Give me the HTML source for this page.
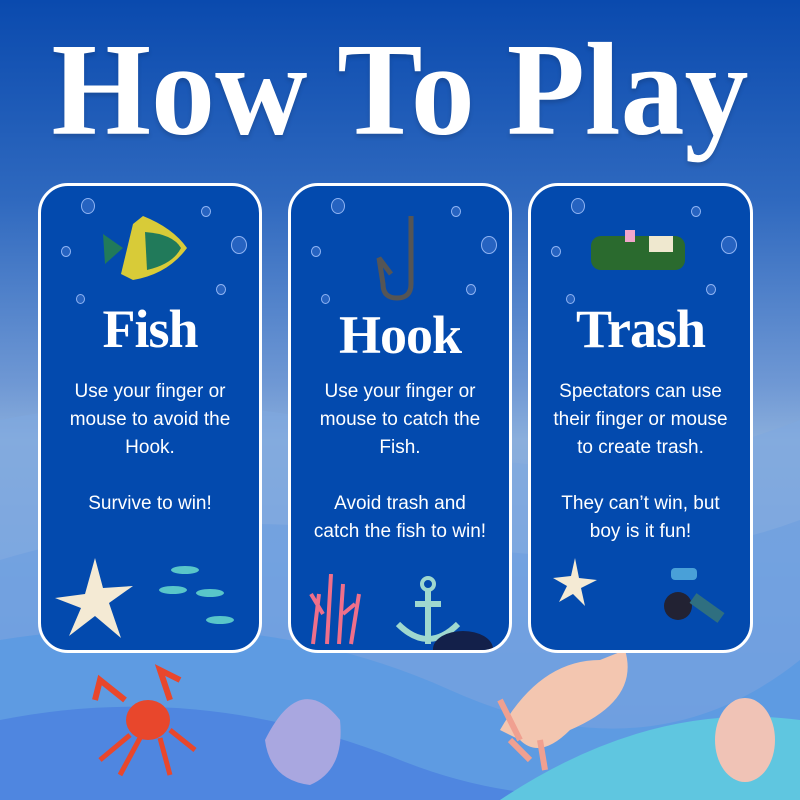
<!DOCTYPE html>
<html><head><style>
html,body{margin:0;padding:0}
body{width:800px;height:800px;position:relative;overflow:hidden;font-family:"Liberation Sans",sans-serif;
background:linear-gradient(180deg,#0a4aae 0%,#2f69bf 25%,#6f98d4 48%,#8aaedc 55%,#7aa6e0 70%,#5a8ee0 100%);}
.bg{position:absolute;left:0;top:0}
h1{position:absolute;left:0;top:23px;width:800px;margin:0;text-align:center;color:#fff;font-family:"Liberation Serif",serif;font-weight:bold;font-size:128px;line-height:128px;transform:scaleY(1.035);transform-origin:top;text-shadow:0 3px 4px rgba(0,0,0,.15);white-space:nowrap}
.card{position:absolute;top:183px;height:464px;background:#034aae;border:3px solid #fff;border-radius:30px;color:#fff;text-align:center;overflow:hidden}
.card h2{position:absolute;left:0;right:0;margin:0;font-family:"Liberation Serif",serif;font-weight:bold;font-size:54px;letter-spacing:-1px}
.card p{position:absolute;left:0;right:0;top:192px;margin:0;font-size:19px;line-height:28px}
.b{position:absolute;border:1.5px solid rgba(170,200,255,.8);border-radius:50%;background:rgba(120,160,240,.3)}
</style></head><body>
<svg class="bg" width="800" height="800">
<path d="M0 420 Q200 380 400 440 T800 420 L800 800 L0 800Z" fill="#7ea8e0" opacity=".6"/>
<path d="M0 560 Q200 500 420 540 T800 520 L800 800 L0 800Z" fill="#6d9ee0" opacity=".6"/>
<path d="M0 640 Q250 600 450 690 T800 660 L800 800 L0 800Z" fill="#5e9be2"/>
<path d="M0 720 Q200 680 400 760 T800 740 L800 800 L0 800Z" fill="#4f86e0"/>
<path d="M500 800 Q650 700 800 720 L800 800Z" fill="#5fc6e0"/>
<g fill="#e8472c"><ellipse cx="148" cy="720" rx="22" ry="20"/><path d="M125 700 L100 680 L95 700 M170 700 L160 670 L180 680" stroke="#e8472c" stroke-width="6" fill="none"/><path d="M130 735 L100 760 M140 738 L120 775 M160 738 L170 775 M170 730 L195 750" stroke="#e8472c" stroke-width="5"/></g>
<path d="M265 740 Q300 670 340 720 Q345 770 310 785 Q270 780 265 740Z" fill="#a9a7e0"/>
<path d="M500 730 Q540 660 600 660 L625 650 Q640 700 570 730 Q540 760 520 740Z" fill="#f3c6b0"/>
<path d="M500 700 L520 740 M510 740 L530 760 M540 740 L545 770" stroke="#f0a090" stroke-width="6"/>
<ellipse cx="745" cy="740" rx="30" ry="42" fill="#f0c3b6"/>
</svg>
<h1>How To Play</h1>

<div class="card" style="left:38px;width:218px">
 <div class="b" style="left:40px;top:12px;width:12px;height:14px"></div><div class="b" style="left:190px;top:50px;width:14px;height:16px"></div><div class="b" style="left:20px;top:60px;width:8px;height:9px"></div><div class="b" style="left:175px;top:98px;width:8px;height:9px"></div><div class="b" style="left:35px;top:108px;width:7px;height:8px"></div><div class="b" style="left:160px;top:20px;width:8px;height:9px"></div>
 <svg style="position:absolute;left:62px;top:28px" width="92" height="70"><path d="M40 2 L30 10 L18 60 L30 66 Q65 60 84 34 Q70 14 40 2Z" fill="#d8cb38"/><path d="M42 18 Q70 20 78 34 Q70 50 44 56Z" fill="#217a5a"/><path d="M0 20 L20 34 L2 50Z" fill="#217a5a"/></svg>
 <h2 style="top:112px">Fish</h2>
 <p>Use your finger or<br>mouse to avoid the<br>Hook.<br><br>Survive to win!</p>
 <svg style="position:absolute;left:14px;top:372px" width="200" height="90"><path d="M40 0 L48 30 L78 28 L54 45 L66 80 L40 58 L14 78 L26 50 L0 40 L30 36Z" fill="#f4ead4"/><g fill="#59c6c9"><ellipse cx="130" cy="12" rx="14" ry="4"/><ellipse cx="118" cy="32" rx="14" ry="4"/><ellipse cx="155" cy="35" rx="14" ry="4"/><ellipse cx="165" cy="62" rx="14" ry="4"/></g></svg>
</div>

<div class="card" style="left:288px;width:218px">
 <div class="b" style="left:40px;top:12px;width:12px;height:14px"></div><div class="b" style="left:190px;top:50px;width:14px;height:16px"></div><div class="b" style="left:20px;top:60px;width:8px;height:9px"></div><div class="b" style="left:175px;top:98px;width:8px;height:9px"></div><div class="b" style="left:30px;top:108px;width:7px;height:8px"></div><div class="b" style="left:160px;top:20px;width:8px;height:9px"></div>
 <svg style="position:absolute;left:80px;top:28px" width="50" height="90"><path d="M40 2 L40 70 Q40 84 26 84 Q12 84 12 70 L8 44 L20 60" stroke="#555" stroke-width="5" fill="none"/></svg>
 <h2 style="top:118px">Hook</h2>
 <p>Use your finger or<br>mouse to catch the<br>Fish.<br><br>Avoid trash and<br>catch the fish to win!</p>
 <svg style="position:absolute;left:12px;top:388px" width="200" height="80"><path d="M10 70 L16 20 M24 70 L28 0 M36 70 L40 10 M48 70 L56 20 M20 40 L8 20 M40 40 L52 30" stroke="#ef6f8a" stroke-width="4" fill="none"/><circle cx="125" cy="10" r="6" stroke="#9fd8cf" stroke-width="4" fill="none"/><path d="M125 16 L125 70 M95 50 Q125 80 155 50 M112 30 L138 30" stroke="#9fd8cf" stroke-width="6" fill="none"/><ellipse cx="160" cy="75" rx="30" ry="18" fill="#13204a"/></svg>
</div>

<div class="card" style="left:528px;width:219px">
 <div class="b" style="left:40px;top:12px;width:12px;height:14px"></div><div class="b" style="left:190px;top:50px;width:14px;height:16px"></div><div class="b" style="left:20px;top:60px;width:8px;height:9px"></div><div class="b" style="left:175px;top:98px;width:8px;height:9px"></div><div class="b" style="left:35px;top:108px;width:7px;height:8px"></div><div class="b" style="left:160px;top:20px;width:8px;height:9px"></div>
 <svg style="position:absolute;left:58px;top:44px" width="100" height="46"><rect x="2" y="6" width="94" height="34" rx="10" fill="#2a6a2e"/><rect x="60" y="6" width="24" height="16" fill="#efe8cf"/><rect x="36" y="0" width="10" height="12" fill="#f1a6cc"/></svg>
 <h2 style="top:112px">Trash</h2>
 <p>Spectators can use<br>their finger or mouse<br>to create trash.<br><br>They can’t win, but<br>boy is it fun!</p>
 <svg style="position:absolute;left:22px;top:372px" width="180" height="80"><path d="M22 0 L26 20 L44 22 L28 30 L32 48 L20 36 L6 44 L14 28 L0 20 L18 18Z" fill="#f4ead4"/><circle cx="125" cy="48" r="14" fill="#223"/><rect x="118" y="10" width="26" height="12" rx="4" fill="#49a0d8"/><path d="M140 40 L168 60" stroke="#2f6f80" stroke-width="12"/></svg>
</div>
</body></html>
